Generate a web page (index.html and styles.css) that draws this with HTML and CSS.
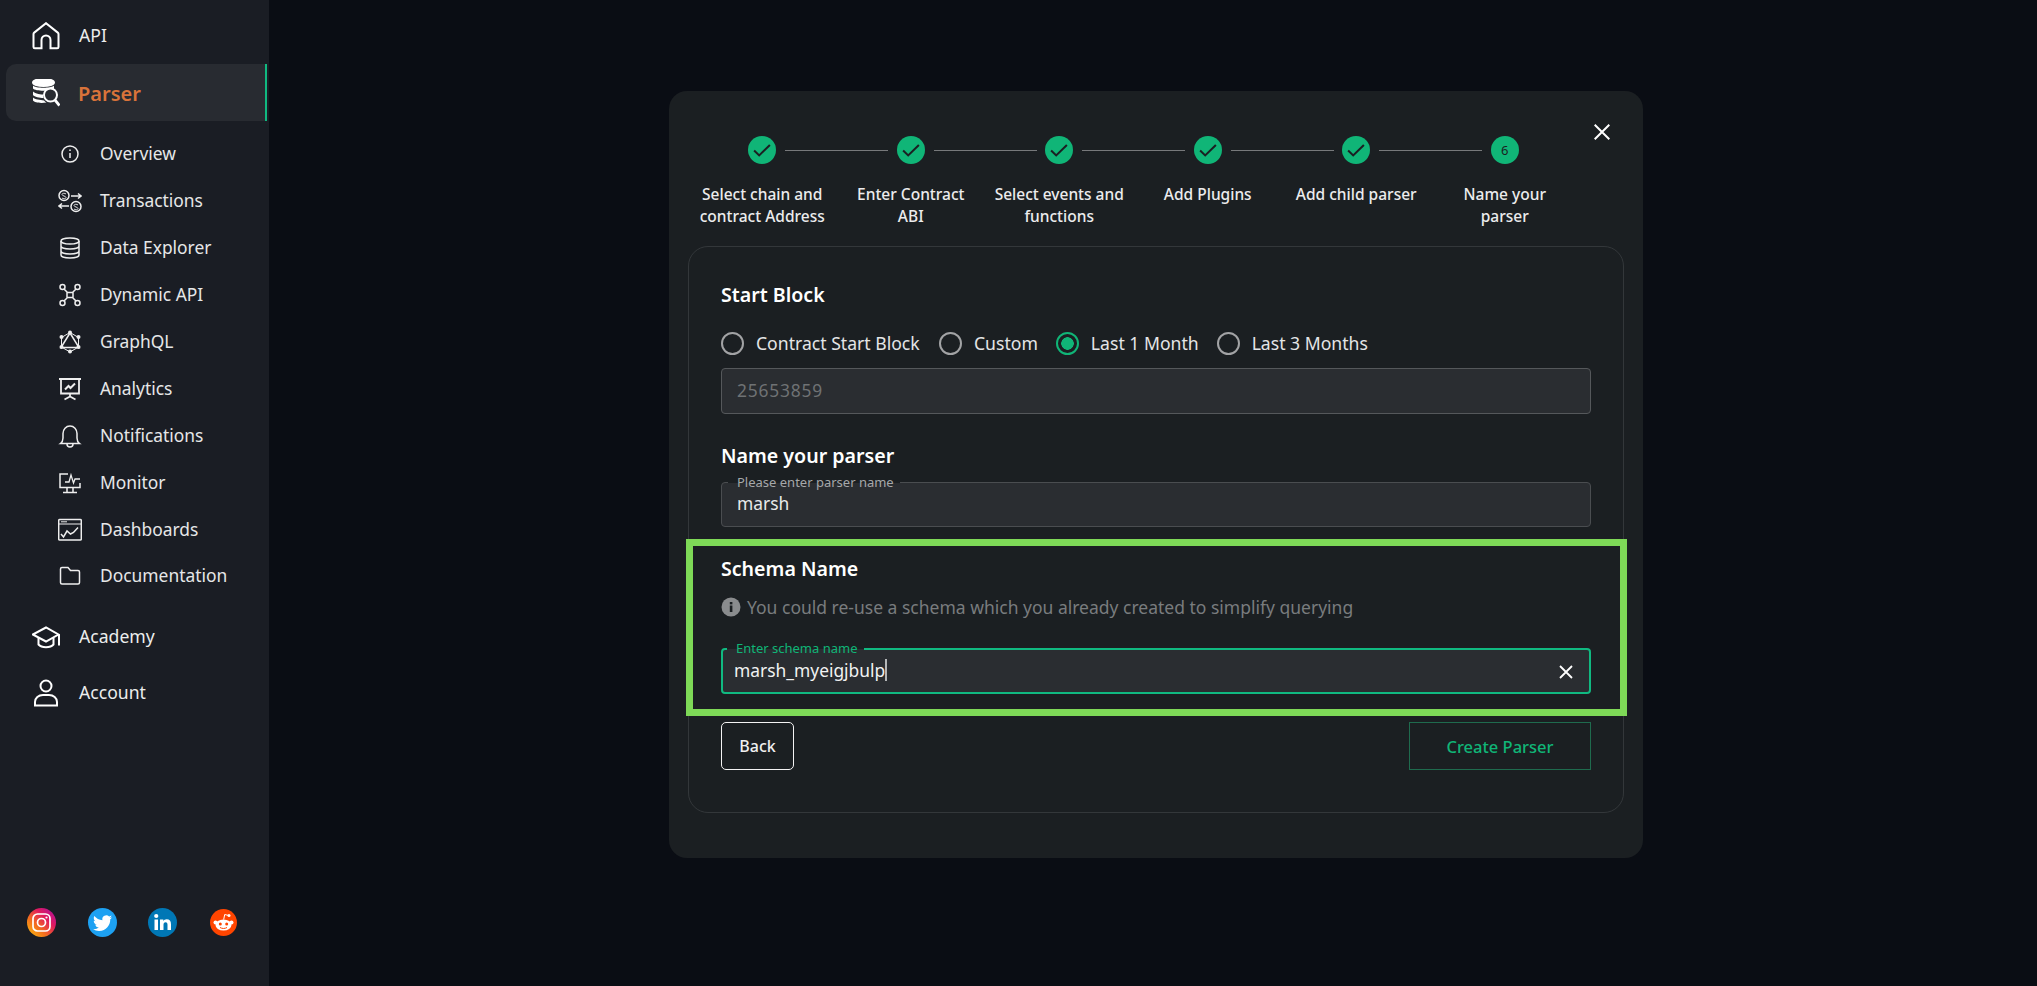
FILE: index.html
```html
<!DOCTYPE html>
<html lang="en">
<head>
<meta charset="utf-8">
<title>Parser</title>
<link rel="stylesheet" href="styles.css">
</head>
<body>
<div class="app">
  <aside class="sidebar">
    <a class="nav-main">
      <svg class="ico-main" viewBox="0 0 28 28"><path d="M1.500 25c0 .8.500 1.300 1.300 1.300H9.500V18c0-2.500 2-4.500 4.500-4.500s4.500 2 4.500 4.500v8.300h6.700c.8 0 1.300-.5 1.300-1.300V12c0-.6-.2-1-.7-1.400L14 1.200 2.200 10.600c-.5.4-.7.800-.7 1.400z"/></svg>
      <span>API</span>
    </a>
    <a class="nav-main nav-active">
      <svg class="ico-main" viewBox="0 0 28 28"><ellipse cx="11.500" cy="3.500" rx="10.500" ry="3.500" fill="#fff"/><path class="fill" d="M1 6.500c2 3 19 3 21 0v3c-2 3-19 3-21 0zM1 12.500c2 2.500 9 3 10 3 0 1.500 0 2.500.5 3.500-4 0-9-1-10.500-3zM1 18.500c2 2 7 2.500 11 3 .8 1 1.500 1.700 2.500 2-5 .8-12 .5-13.500-2z"/><circle cx="18.500" cy="16" r="6.500" stroke-width="2" fill="#282b31"/><path d="M23 21l4.500 5.500" stroke-width="2.800"/></svg>
      <span>Parser</span>
    </a>
    <nav class="sub-list">
      <a class="nav-sub"><svg class="ico-sub" viewBox="0 0 24 24"><circle cx="12" cy="12" r="8"/><path d="M12 11v5M12 7.500v1.500"/></svg><span>Overview</span></a>
      <a class="nav-sub"><svg class="ico-sub" viewBox="0 0 24 24"><circle cx="6" cy="6.500" r="5"/><path class="thin" d="M8 5c-1-1-4-1-4 .5S8 7 8 8.500 5 10 4 9"/><path d="M13 7h10M20 4.500l3 2.500-3 2.500"/><circle cx="18" cy="17.500" r="5"/><path class="thin" d="M20 16c-1-1-4-1-4 .5s4 1.500 4 3-3 1.500-4 .5"/><path d="M1 17h10M4 14.500l-3 2.500 3 2.500"/></svg><span>Transactions</span></a>
      <a class="nav-sub"><svg class="ico-sub" viewBox="0 0 24 24"><ellipse cx="12" cy="5" rx="9" ry="3"/><path d="M3 5v14c0 1.700 4 3 9 3s9-1.300 9-3V5M3 10c0 1.700 4 3 9 3s9-1.300 9-3M3 15c0 1.700 4 3 9 3s9-1.300 9-3"/></svg><span>Data Explorer</span></a>
      <a class="nav-sub"><svg class="ico-sub" viewBox="0 0 24 24"><circle cx="4.500" cy="4" r="2.500"/><circle cx="19.500" cy="4" r="2.500"/><circle cx="4.500" cy="20" r="2.500"/><circle cx="19.500" cy="20" r="2.500"/><path d="M6 6l3.500 3.500M18 6l-3.500 3.500M6 18l3.500-3.500M18 18l-3.500-3.500M9 9.500h6v5H9z"/></svg><span>Dynamic API</span></a>
      <a class="nav-sub"><svg class="ico-sub" viewBox="0 0 24 24"><path d="M12 2.500l8.500 5v9.500l-8.500 5-8.500-5V7.500z" stroke-width="1"/><path d="M12 3L3 17.500h18z"/><g class="fill"><circle cx="12" cy="2.500" r="2"/><circle cx="20.500" cy="7" r="2"/><circle cx="20.500" cy="17" r="2"/><circle cx="12" cy="21.500" r="2"/><circle cx="3.500" cy="17" r="2"/><circle cx="3.500" cy="7" r="2"/></g></svg><span>GraphQL</span></a>
      <a class="nav-sub"><svg class="ico-sub" viewBox="0 0 24 24"><path d="M1 2h22M3 2.500v14h18v-14M12 16.500v3M6.500 22.500l5.500-3 5.500 3" stroke-width="1.800"/><path d="M7 12.500l3.500-3.500 2 2 4.500-4.500" stroke-width="2"/></svg><span>Analytics</span></a>
      <a class="nav-sub"><svg class="ico-sub" viewBox="0 0 24 24"><path d="M2.500 19.500c2-1.500 2.500-3 2.500-5.500V9.500c0-4 3-7.500 7-7.500s7 3.500 7 7.500V14c0 2.500.5 4 2.500 5.500z"/><path d="M9 20c0 4 6 4 6 0"/></svg><span>Notifications</span></a>
      <a class="nav-sub"><svg class="ico-sub" viewBox="0 0 24 24"><path d="M10 3H2v13.500h20V12M9 16.500v5M15 16.500v5M5 21.500h14"/><path d="M7 11h4l2-7 2.500 8 1.500-4h5" stroke-width="1.300"/></svg><span>Monitor</span></a>
      <a class="nav-sub"><svg class="ico-sub" viewBox="0 0 24 24"><rect x=".7" y="1.500" width="22.600" height="20.500" rx="1"/><path d="M1 6h22" stroke-width="1"/><path d="M3 3.800h6" stroke-width="1"/><path d="M3 16l2.500 3 3.500-6 3.500 3 3-1.500 4.500-5" stroke-width="1.500"/></svg><span>Dashboards</span></a>
      <a class="nav-sub"><svg class="ico-sub" viewBox="0 0 24 24"><path d="M2.500 5c0-.8.500-1.500 1.500-1.500h6l2.500 3H20c1 0 1.500.7 1.500 1.500v10.500c0 .8-.5 1.500-1.500 1.500H4c-1 0-1.500-.7-1.500-1.500z"/></svg><span>Documentation</span></a>
    </nav>
    <a class="nav-main nav-academy">
      <svg class="ico-main" viewBox="0 0 28 28"><path d="M14 4.500L.8 11.500 14 18.500l12.500-7z"/><path d="M6.500 15v6.500c3 3.500 12 3.500 15 0V15M27 11.500V22.500"/></svg>
      <span>Academy</span>
    </a>
    <a class="nav-main nav-account">
      <svg class="ico-main" viewBox="0 0 28 28"><circle cx="14" cy="7" r="5.500"/><path d="M3 26.500v-3.500C3 19 6.500 16 11 16h6c4.500 0 8 3 8 7v3.500z"/></svg>
      <span>Account</span>
    </a>
    <div class="socials">
      <svg class="social" viewBox="0 0 29 29">
        <defs><linearGradient id="ig" x1="0" y1="1" x2="1" y2="0"><stop offset="0" stop-color="#fdc70c"/><stop offset=".35" stop-color="#f3701d"/><stop offset=".65" stop-color="#e01a5e"/><stop offset="1" stop-color="#a80fa8"/></linearGradient></defs>
        <circle cx="14.500" cy="14.500" r="14.500" fill="url(#ig)"/>
        <rect x="6" y="6" width="17" height="17" rx="4.500" fill="none" stroke="#fff" stroke-width="1.700"/>
        <circle cx="14.500" cy="14.500" r="4" fill="none" stroke="#fff" stroke-width="1.700"/>
        <circle cx="19.500" cy="9.500" r="1.100" fill="#fff"/>
      </svg>
      <svg class="social" viewBox="0 0 29 29">
        <circle cx="14.500" cy="14.500" r="14.500" fill="#1da1f2"/>
        <path transform="translate(5 5.500) scale(.8)" fill="#fff" d="M23.953 4.570a10 10 0 01-2.825.775 4.958 4.958 0 002.163-2.723c-.951.555-2.005.959-3.127 1.184a4.920 4.920 0 00-8.384 4.482C7.690 8.095 4.067 6.130 1.640 3.162a4.822 4.822 0 00-.666 2.475c0 1.710.870 3.213 2.188 4.096a4.904 4.904 0 01-2.228-.616v.060a4.923 4.923 0 003.946 4.827 4.996 4.996 0 01-2.212.085 4.936 4.936 0 004.604 3.417 9.867 9.867 0 01-6.102 2.105c-.390 0-.779-.023-1.170-.067a13.995 13.995 0 007.557 2.209c9.053 0 13.998-7.496 13.998-13.985 0-.210 0-.420-.015-.630A9.935 9.935 0 0024 4.590z"/>
      </svg>
      <svg class="social" viewBox="0 0 29 29">
        <circle cx="14.500" cy="14.500" r="14.500" fill="#0077b5"/>
        <rect x="6.500" y="11.500" width="3.500" height="10.500" fill="#fff"/>
        <circle cx="8.250" cy="8" r="2.100" fill="#fff"/>
        <path fill="#fff" d="M12 11.500h3.300v1.500c.7-1.100 1.900-1.800 3.300-1.800 3 0 4.400 1.800 4.400 5V22h-3.500v-5.200c0-1.500-.5-2.500-1.900-2.500-1.500 0-2.100 1.100-2.100 2.500V22H12z"/>
      </svg>
      <svg class="social" viewBox="0 0 29 29">
        <circle cx="14.500" cy="14.500" r="13.500" fill="#ff4500"/>
        <ellipse cx="14.500" cy="17" rx="8" ry="5.500" fill="#fff"/>
        <circle cx="6.500" cy="14.500" r="2" fill="#fff"/>
        <circle cx="22.500" cy="14.500" r="2" fill="#fff"/>
        <circle cx="11.300" cy="16" r="1.500" fill="#ff4500"/>
        <circle cx="17.700" cy="16" r="1.500" fill="#ff4500"/>
        <path d="M11 19.500c2 1.300 5 1.300 7 0" fill="none" stroke-width="1" stroke="#ff4500"/>
        <path d="M14.700 11.500l1-5 4 1" fill="none" stroke-width="1" stroke="#fff"/>
        <circle cx="20" cy="7.500" r="1.500" fill="#fff"/>
      </svg>
    </div>
  </aside>

  <main class="main">
    <section class="modal">
      <button class="close" type="button" aria-label="Close">
        <svg viewBox="0 0 16 16"><path d="M.7.7l14.600 14.600M15.300.7L.7 15.300"/></svg>
      </button>

      <ol class="stepper">
        <li class="step"><span class="dot"><svg viewBox="0 0 16 16"><path d="M1 8.500l4.500 4.300L15 3.500"/></svg></span><span class="step-label">Select chain and<br>contract Address</span></li>
        <li class="step"><span class="dot"><svg viewBox="0 0 16 16"><path d="M1 8.500l4.500 4.300L15 3.500"/></svg></span><span class="step-label">Enter Contract<br>ABI</span></li>
        <li class="step"><span class="dot"><svg viewBox="0 0 16 16"><path d="M1 8.500l4.500 4.300L15 3.500"/></svg></span><span class="step-label">Select events and<br>functions</span></li>
        <li class="step"><span class="dot"><svg viewBox="0 0 16 16"><path d="M1 8.500l4.500 4.300L15 3.500"/></svg></span><span class="step-label">Add Plugins</span></li>
        <li class="step"><span class="dot"><svg viewBox="0 0 16 16"><path d="M1 8.500l4.500 4.300L15 3.500"/></svg></span><span class="step-label">Add child parser</span></li>
        <li class="step step-last"><span class="dot dot-num">6</span><span class="step-label">Name your<br>parser</span></li>
      </ol>

      <div class="card">
        <h2 class="title">Start Block</h2>
        <div class="radios">
          <label class="radio"><span class="radio-mark"></span>Contract Start Block</label>
          <label class="radio"><span class="radio-mark"></span>Custom</label>
          <label class="radio"><span class="radio-mark radio-on"></span>Last 1 Month</label>
          <label class="radio"><span class="radio-mark"></span>Last 3 Months</label>
        </div>
        <div class="field field-disabled">25653859</div>

        <h2 class="title title-name">Name your parser</h2>
        <div class="field field-name">
          <span class="legend">Please enter parser name</span>
          marsh
        </div>

        <h2 class="title title-schema">Schema Name</h2>
        <p class="help">
          <svg class="help-ico" viewBox="0 0 20 20"><circle cx="10" cy="10" r="9.500"/><rect class="help-i" x="8.800" y="8.500" width="2.600" height="6.500"/><rect class="help-i" x="8.800" y="5" width="2.600" height="2.400"/></svg>
          You could re-use a schema which you already created to simplify querying
        </p>
        <div class="field field-focus">
          <span class="legend legend-focus">Enter schema name</span>
          <span class="value">marsh_myeigjbulp</span><span class="caret"></span>
          <svg class="clear" viewBox="0 0 14 14"><path d="M1 1l12 12M13 1L1 13"/></svg>
        </div>

        <div class="actions">
          <button class="btn btn-back" type="button">Back</button>
          <button class="btn btn-create" type="button">Create Parser</button>
        </div>
      </div>

      <div class="annotation"></div>
    </section>
  </main>
</div>
</body>
</html>
```

FILE: styles.css
```css
* { box-sizing: border-box; }
html, body { margin: 0; height: 100%; }
body {
  background: #0a0d14;
  color: #fff;
  font-family: "Noto Sans", "Liberation Sans", sans-serif;
  overflow: hidden;
}
.app { display: flex; height: 986px; }

/* sidebar */
.sidebar {
  width: 269px;
  flex: none;
  background: #1a1d24;
  display: flex;
  flex-direction: column;
  padding: 12px 0 49px;
}
.nav-main {
  display: flex;
  align-items: center;
  height: 48px;
  padding-left: 32px;
  font-size: 17.600px;
  color: #eceded;
}
.nav-main span { margin: -2px 0 0 19px; }
.ico-main { width: 28px; height: 28px; flex: none; fill: none; stroke: #fff; stroke-width: 2; }
.ico-main .fill { fill: #fff; stroke: none; }
.nav-active {
  height: 57px;
  margin: 4px 2px 0 6px;
  padding-left: 26px;
  background: #282b31;
  border-right: 2px solid #10b981;
  border-radius: 10px 0 0 10px;
  font-size: 20px;
  font-weight: 600;
  color: #d9733a;
}
.nav-active span { margin: 2px 0 0 18px; }
.sub-list { display: flex; flex-direction: column; margin-top: 10px; }
.nav-sub {
  display: flex;
  align-items: center;
  height: 46.900px;
  padding-left: 58px;
  font-size: 17.400px;
  color: #e6e7e8;
}
.nav-sub span { margin: -2px 0 0 18px; }
.ico-sub { width: 24px; height: 24px; flex: none; fill: none; stroke: #eee; stroke-width: 1.500; }
.ico-sub .thin { stroke-width: .9; }
.ico-sub .fill { fill: #eee; stroke: none; }
.nav-academy { margin-top: 13px; }
.nav-account { margin-top: 8px; }
.socials {
  margin-top: auto;
  display: flex;
  gap: 31.600px;
  padding-left: 27px;
}
.social { width: 29px; height: 29px; flex: none; }

/* modal */
.main { flex: 1; min-width: 0; }
.modal {
  position: relative;
  width: 974px;
  margin: 91px 0 0 400px;
  padding: 45px 19px;
  background: #1b1f22;
  border-radius: 18px;
}
.close {
  position: absolute;
  top: 33px;
  right: 33px;
  width: 16px;
  height: 16px;
  padding: 0;
  background: none;
  border: 0;
}
.close svg { display: block; width: 16px; height: 16px; fill: none; stroke: #fff; stroke-width: 2; }

.stepper {
  list-style: none;
  margin: 0 0 18px;
  padding: 0;
  width: 891px;
  display: grid;
  grid-template-columns: repeat(6, 1fr);
  height: 92px;
}
.step {
  position: relative;
  display: flex;
  flex-direction: column;
  align-items: center;
}
.step::after {
  content: "";
  position: absolute;
  top: 14px;
  left: calc(50% + 23px);
  width: 103px;
  height: 1px;
  background: #77797b;
}
.step-last::after { display: none; }
.dot {
  width: 28px;
  height: 28px;
  border-radius: 50%;
  background: #10b577;
  display: flex;
  align-items: center;
  justify-content: center;
}
.dot svg { width: 18px; height: 18px; fill: none; stroke: #1b1f22; stroke-width: 1.800; }
.dot-num { font-size: 13px; color: #1b1f22; }
.step-label {
  margin-top: 19px;
  text-align: center;
  white-space: nowrap;
  font-size: 15.500px;
  line-height: 22px;
  font-weight: 500;
  color: #ececed;
}

.card {
  height: 567px;
  padding: 35px 32px 0;
  border: 1px solid #33373a;
  border-radius: 20px;
}
.title {
  margin: 0;
  font-size: 19.600px;
  line-height: 26px;
  font-weight: 600;
  color: #fff;
}
.title-name { margin-top: 29px; }
.title-schema { margin-top: 29px; }
.radios {
  display: flex;
  height: 24px;
  margin-top: 23px;
  font-size: 17.600px;
  color: #e4e5e6;
}
.radio {
  display: flex;
  align-items: center;
  margin-right: 18px;
  white-space: nowrap;
}
.radio:first-child { margin-right: 19.300px; }
.radio-mark {
  width: 23px;
  height: 23px;
  margin-right: 12px;
  border: 2px solid #a2a3a5;
  border-radius: 50%;
  flex: none;
}
.radio-on {
  border-color: #10b577;
  background: radial-gradient(circle, #10b577 0 6px, transparent 6.500px);
}
.field {
  position: relative;
  display: flex;
  align-items: center;
  height: 46px;
  margin-top: 13px;
  padding: 0 15px;
  background: #2a2d31;
  border: 1px solid #55585b;
  border-radius: 4px;
  font-size: 17.400px;
  color: #e8e9ea;
}
.field-disabled { color: #6f7274; letter-spacing: .8px; padding-bottom: 2px; }
.field-name { height: 45px; padding-bottom: 4px; border-color: #4a4d50; }
.legend {
  position: absolute;
  top: -8px;
  left: 6px;
  padding: 0 6px 0 9px;
  height: 14px;
  line-height: 14px;
  font-size: 13px;
  letter-spacing: 0;
  color: #a6a8aa;
  background: linear-gradient(#1b1f22 0 8px, #2a2d31 8px);
  white-space: nowrap;
}
.help {
  display: flex;
  align-items: center;
  height: 24px;
  margin: 13px 0 0;
  font-size: 17.500px;
  color: #797c7e;
}
.help-ico { width: 20px; height: 20px; margin-right: 6px; flex: none; fill: #8a8c8e; }
.help-i { fill: #1b1f22; }
.field-focus {
  height: 46px;
  margin-top: 29px;
  padding: 0 0 2px 11px;
  border: 2px solid #10b981;
}
.legend-focus {
  top: -9px;
  left: 4px;
  color: #10b577;
}
.value { color: #f1f2f2; }
.caret { width: 1.500px; height: 22px; background: #b5b7b8; }
.clear {
  position: absolute;
  right: 16px;
  top: 15px;
  width: 14px;
  height: 14px;
  fill: none;
  stroke: #fff;
  stroke-width: 1.800;
}
.actions {
  display: flex;
  justify-content: space-between;
  margin-top: 28px;
}
.btn {
  height: 48px;
  padding: 0;
  background: none;
  font-family: inherit;
  font-weight: 500;
}
.btn-back {
  width: 73px;
  border: 1px solid #f3f3f3;
  border-radius: 5px;
  font-size: 16px;
  color: #f0f0f0;
}
.btn-create {
  width: 182px;
  border: 1px solid #1f6b4e;
  font-size: 16.500px;
  color: #10b577;
}
.annotation {
  position: absolute;
  left: 17px;
  top: 448px;
  width: 941px;
  height: 177px;
  border: 7px solid #7ed957;
  pointer-events: none;
}
```
